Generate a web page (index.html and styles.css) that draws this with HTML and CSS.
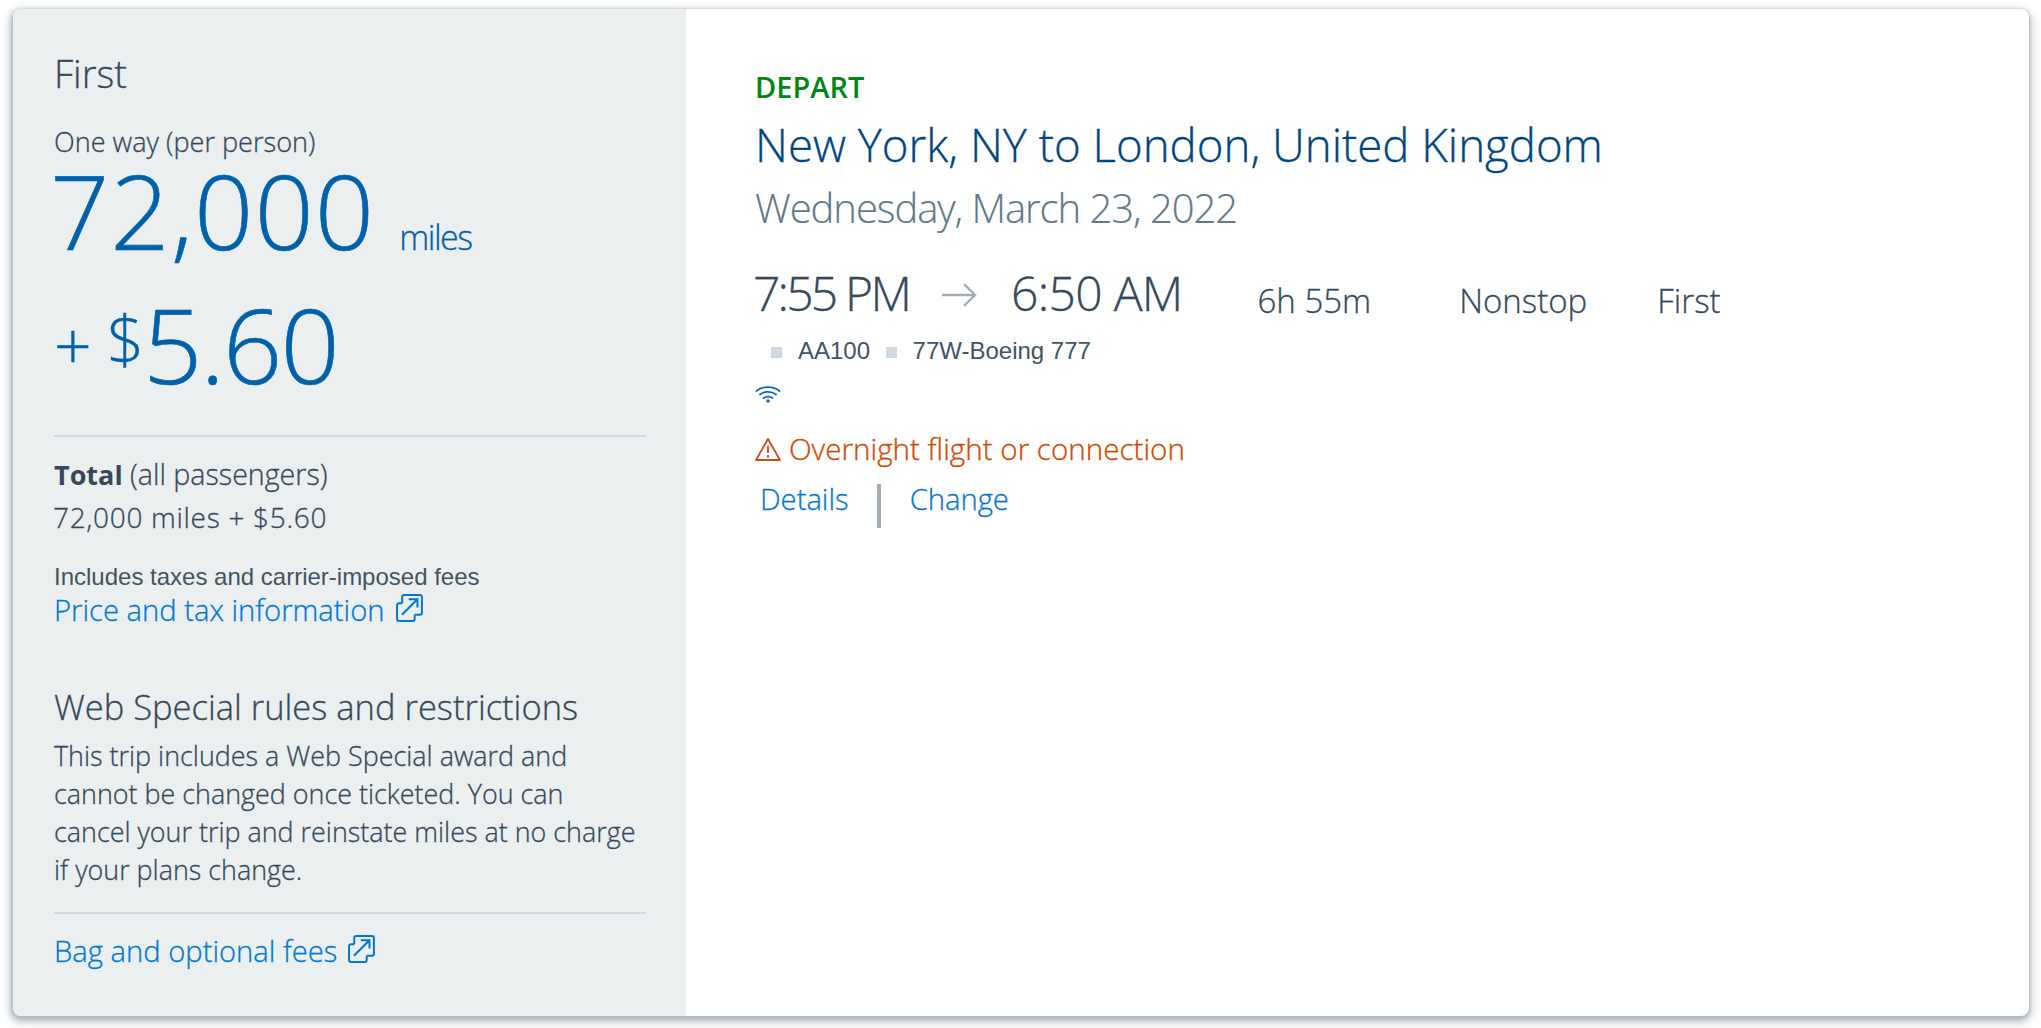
FILE: index.html
```html
<!DOCTYPE html>
<html lang="en">
<head>
<meta charset="utf-8">
<title>Flight summary</title>
<link rel="stylesheet" href="styles.css">
</head>
<body>
<div class="card">
  <aside class="side">
    <div class="cabin">First</div>
    <div class="oneway">One way (per person)</div>
    <div class="miles-row"><span class="miles-num">72,000</span><span class="miles-unit">miles</span></div>
    <div class="cash-row"><span class="plus">+</span><span class="dollar">$</span><span class="cash-num">5.60</span></div>
    <hr class="rule rule-a">
    <div class="total"><strong>Total</strong> (all passengers)</div>
    <div class="total-val">72,000 miles + $5.60</div>
    <div class="incl">Includes taxes and carrier-imposed fees</div>
    <a class="link link-price" href="#">Price and tax information<svg class="ext" viewBox="1 1 27 27" fill="none" stroke="currentColor" stroke-width="1.9"><path d="M7 10V4a2 2 0 0 1 2-2h15a2 2 0 0 1 2 2v15a2 2 0 0 1-2 2h-5"/><path d="M7 10H4a2 2 0 0 0-2 2v13a2 2 0 0 0 2 2h13a2 2 0 0 0 2-2v-4"/><path d="M6.7 21L21.7 6M13.3 6h8.4v8"/></svg></a>
    <h2 class="rules-h">Web Special rules and restrictions</h2>
    <p class="rules-p">This trip includes a Web Special award and cannot be changed once ticketed. You can cancel your trip and reinstate miles at no charge if your plans change.</p>
    <hr class="rule rule-b">
    <a class="link" href="#">Bag and optional fees<svg class="ext" viewBox="1 1 27 27" fill="none" stroke="currentColor" stroke-width="1.9"><path d="M7 10V4a2 2 0 0 1 2-2h15a2 2 0 0 1 2 2v15a2 2 0 0 1-2 2h-5"/><path d="M7 10H4a2 2 0 0 0-2 2v13a2 2 0 0 0 2 2h13a2 2 0 0 0 2-2v-4"/><path d="M6.7 21L21.7 6M13.3 6h8.4v8"/></svg></a>
  </aside>
  <main class="main">
    <div class="depart">DEPART</div>
    <h1 class="route">New York, NY to London, United Kingdom</h1>
    <div class="date">Wednesday, March 23, 2022</div>
    <div class="times">
      <span class="time time-a">7:55 PM</span>
      <svg class="arrow" viewBox="0 0 36 26" fill="none" stroke="#a3adb5" stroke-width="2.4"><path d="M1 13H34M23 2L34 13L23 24"/></svg>
      <span class="time time-b">6:50 AM</span>
      <span class="meta meta-dur">6h 55m</span>
      <span class="meta meta-stop">Nonstop</span>
      <span class="meta">First</span>
    </div>
    <div class="flight">
      <span class="sq"></span><span class="flight-t">AA100</span>
      <span class="sq sq-b"></span><span>77W-Boeing 777</span>
    </div>
    <svg class="wifi" viewBox="0 0 26 18" fill="none" stroke="#0a6ab5" stroke-width="1.7" stroke-linecap="round"><path d="M1.5 6C7.5 .8 18.5 .8 24.5 6"/><path d="M5 9.5C9.5 6 16.5 6 21 9.5"/><path d="M8.5 13C11 11.2 15 11.2 17.5 13"/><circle cx="13" cy="16" r="1.7" fill="#0a6ab5" stroke="none"/></svg>
    <div class="warn"><svg class="warn-i" viewBox="0 0 26 24" fill="none" stroke="#d14a12" stroke-width="1.8" stroke-linejoin="round"><path d="M13 2L25 23H1Z"/><path d="M13 9V16M13 18V20.4"/></svg>Overnight flight or connection</div>
    <div class="actions">
      <a class="link act" href="#">Details</a>
      <span class="sep"></span>
      <a class="link" href="#">Change</a>
    </div>
  </main>
</div>
</body>
</html>
```
FILE: styles.css
```css
* { box-sizing: border-box; }
html, body { margin: 0; height: 100%; background: #fff; }
body {
  padding: 9px 12px 12px 13px;
  font-family: "Open Sans", sans-serif;
  font-weight: 300;
  color: #36495a;
  -webkit-text-stroke: .3px;
}
.card {
  display: flex;
  height: 1007px;
  border-radius: 8px;
  overflow: hidden;
  background: #fff;
  box-shadow: 0 1px 2px 1px #b3bfcb, 0 4px 10px 1px rgba(100,115,130,.5), -2px 2px 6px rgba(100,115,130,.3);
}
.side {
  width: 673px;
  flex: none;
  background: #ebeff0;
  padding: 39px 40px 0 41px;
  display: flex;
  flex-direction: column;
  align-items: flex-start;
}
.cabin { font-size: 38px; line-height: 50px; }
.oneway { font-size: 27.1px; line-height: 32px; margin-top: 28px; }
.miles-row { display: flex; align-items: baseline; color: #0061ab; height: 104px; }
.miles-num { font-size: 104px; line-height: 104px; letter-spacing: 1px; margin-left: -4px; -webkit-text-stroke: .6px; }
.miles-unit { font-size: 34px; margin-left: 24px; letter-spacing: -1.5px; }
.cash-row { display: flex; align-items: flex-start; color: #0061ab; height: 118px; margin-top: 24px; }
.plus { font-size: 66px; line-height: 66px; margin-right: 15px; margin-top: 25px; }
.dollar { font-size: 66px; line-height: 66px; margin-right: -1.5px; margin-top: 19px; }
.cash-num { font-size: 104px; line-height: 118px; letter-spacing: -2px; margin-top: -1px; -webkit-text-stroke: .6px; }
.rule { align-self: stretch; border: 0; height: 2px; background: #d0d9e0; margin: 0; }
.rule-a { margin-top: 31px; }
.total { font-size: 28.6px; line-height: 38px; margin-top: 17.5px; }
.total strong { font-weight: 700; font-size: 27px; -webkit-text-stroke: 0; }
.total-val { font-size: 28px; line-height: 38px; margin-top: 4px; letter-spacing: .7px; margin-left: -1px; }
.incl { font-family: "Liberation Sans", sans-serif; font-weight: 400; font-size: 24px; line-height: 34px; margin-top: 24.5px; -webkit-text-stroke: 0; color: #42545f; }
.link { color: #0078d2; text-decoration: none; font-size: 29.2px; line-height: 38px; display: inline-flex; align-items: center; }
.link-price { margin-top: -3px; }
.ext { width: 28px; height: 28px; margin-left: 11px; margin-top: -4px; -webkit-text-stroke: 0; }
.rules-h { font-size: 34.5px; line-height: 46px; font-weight: 300; margin: 55px 0 0; }
.rules-p { font-size: 26.9px; line-height: 38px; margin: 7.3px 0 0; max-width: 590px; }
.rule-b { margin-top: 23px; }
.rule-b + .link { margin-top: 18px; }
.main { flex: 1; padding: 58px 0 0 69px; display: flex; flex-direction: column; align-items: flex-start; }
.depart { color: #008712; font-size: 29px; line-height: 40px; font-weight: 600; -webkit-text-stroke: 0; }
.route { color: #00467f; font-size: 45.6px; line-height: 62px; font-weight: 300; margin: 6px 0 0; }
.date { color: #627a88; font-size: 40px; line-height: 58px; margin-top: 4px; letter-spacing: -1.05px; -webkit-text-stroke: .15px; }
.times { display: flex; align-items: flex-start; margin-top: 25px; line-height: 62px; margin-left: -2px; }
.time { font-size: 48px; }
.time-a { letter-spacing: -2.8px; }
.time-b { letter-spacing: -.7px; }
.arrow { width: 36px; height: 26px; margin: 20px 34px 0 32px; }
.meta { font-size: 33px; padding-top: 8px; }
.meta-dur { margin-left: 75px; margin-right: 88px; }
.meta-stop { margin-right: 70px; }
.flight { font-family: "Liberation Sans", sans-serif; font-weight: 400; font-size: 24px; line-height: 36px; margin-top: .5px; margin-left: 16px; display: flex; align-items: center; -webkit-text-stroke: 0; color: #42545f; }
.sq { width: 11px; height: 11px; background: #d0d9e0; margin-right: 16px; margin-top: 3px; }
.sq-b { margin-right: 15.5px; }
.flight-t { margin-right: 16px; }
.wifi { width: 26px; height: 18px; margin-top: 16px; }
.warn { color: #d14900; font-size: 29.6px; line-height: 40px; margin-top: 26px; display: flex; align-items: center; }
.warn-i { width: 26px; height: 24px; margin-right: 8px; }
.actions { display: flex; align-items: flex-start; margin-top: 11px; margin-left: 5px; }
.sep { width: 4px; height: 44px; background: #a3adb5; margin: 4px 29px 0 28px; }
```
